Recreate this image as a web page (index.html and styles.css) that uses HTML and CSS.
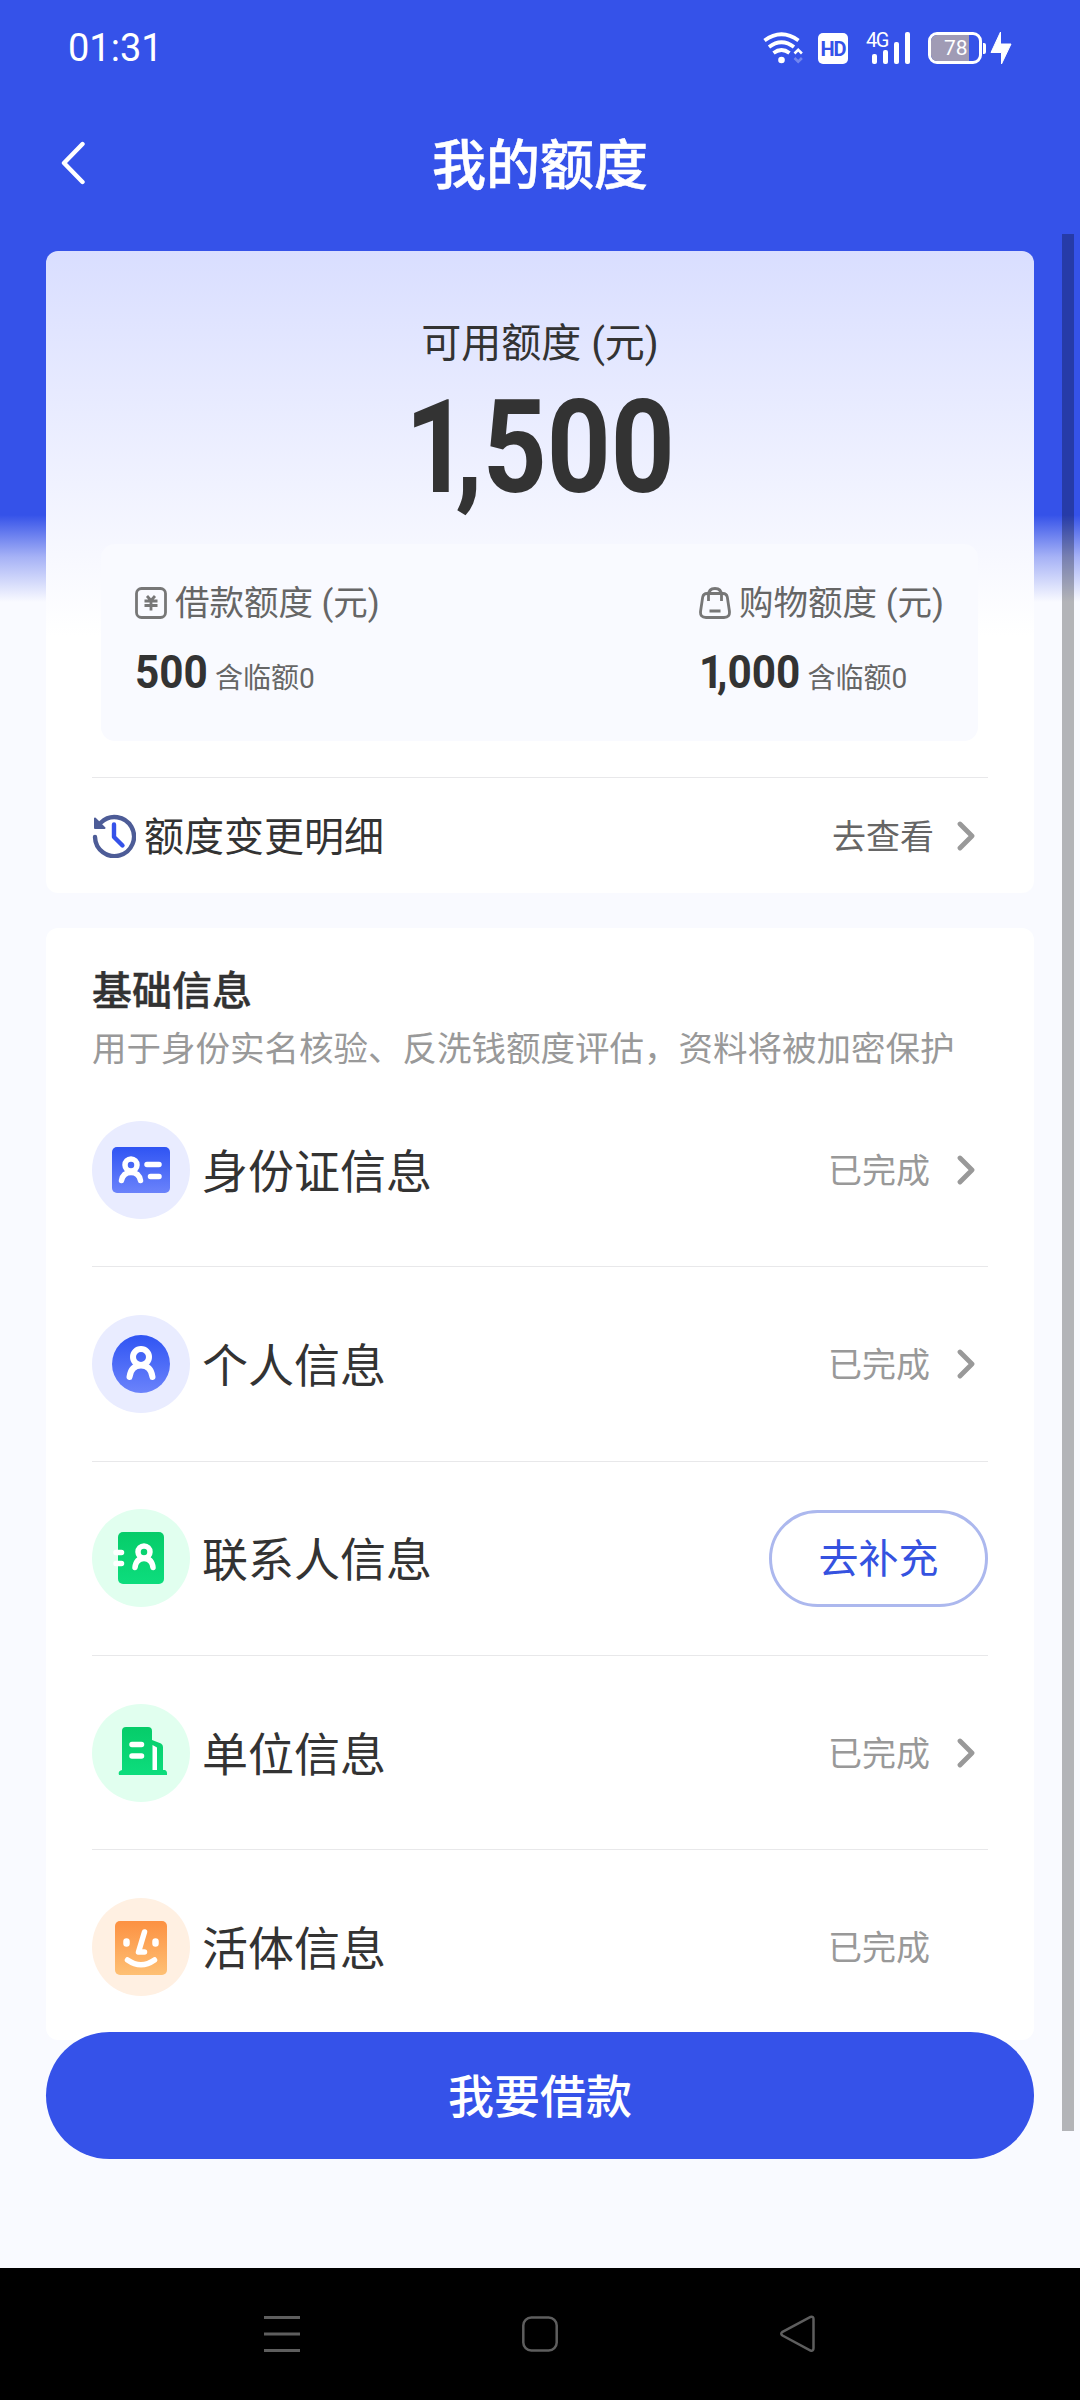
FILE: index.html
```html
<!DOCTYPE html>
<html lang="zh-CN">
<head>
<meta charset="utf-8">
<title>我的额度</title>
<link rel="stylesheet" href="styles.css">
</head>
<body>
<div class="screen">
  <header class="status-bar">
    <span class="clock">01:31</span>
    <div class="status-icons">
      <svg class="ic-wifi" width="40" height="32" viewBox="0 0 40 32" fill="none" stroke="#fff" stroke-width="3.8">
        <path d="M1.500 8.500Q18.500-4 35.500 8.500M6 15Q18.500 5.500 31 15M10.500 21Q18.500 15 26.500 21"/>
        <circle cx="18.500" cy="28" r="3.300" fill="#fff" stroke="none"/>
        <path d="M31.500 21.500l3.700-3.700 3.700 3.700" stroke-width="2.600"/>
        <path d="M31.500 26l3.700 3.700 3.700-3.700" stroke-width="2.600" opacity=".3"/>
      </svg>
      <span class="hd">HD</span>
      <span class="signal">
        <span class="net">4G</span>
        <svg width="44" height="32" viewBox="0 0 44 32" fill="#fff">
          <rect x="6" y="22" width="5" height="10" rx="2"/><rect x="17" y="18" width="5" height="14" rx="2"/><rect x="28" y="10" width="5" height="22" rx="2"/><rect x="39" y="0" width="5" height="32" rx="2"/>
        </svg>
      </span>
      <span class="battery"><span class="level">78</span></span>
      <svg class="ic-bolt" width="22" height="32" viewBox="0 0 22 32" fill="#fff"><path d="M10.500 0V12H21L11.500 32V20.500H1Z" stroke="#fff" stroke-width="1" stroke-linejoin="round"/></svg>
    </div>
  </header>

  <nav class="title-bar">
    <svg class="back" width="24" height="44" viewBox="0 0 24 44" fill="none" stroke="#fff" stroke-width="4.400" stroke-linecap="round" stroke-linejoin="round"><path d="M21.500 3L3 22l18.500 19"/></svg>
    <h1>我的额度</h1>
  </nav>

  <main>
    <section class="card quota">
      <p class="quota-label">可用额度 (元)</p>
      <p class="quota-total"><span><i>1</i><i>,</i>500</span></p>
      <div class="split">
        <div class="part">
          <p class="part-label">
            <svg width="32" height="32" viewBox="0 0 32 32" fill="none" stroke="#777" stroke-width="2.800"><rect x="1.500" y="1.500" width="29" height="29" rx="5"/><path d="M12 9l4 4.500L20 9M9.500 14h13M9.500 18.500h13M16 14v9.500"/></svg>
            <span>借款额度 (元)</span>
          </p>
          <p class="part-value"><b>500</b><small>含临额0</small></p>
        </div>
        <div class="part">
          <p class="part-label">
            <svg width="32" height="32" viewBox="0 0 32 32" fill="none" stroke="#777" stroke-width="2.800"><path d="M8 6.500h16Q27.500 6.500 28.300 10L30.400 24Q31.200 30.500 25 30.500H7Q.8 30.500 1.600 24L3.700 10Q4.500 6.500 8 6.500Z"/><path d="M9.500 14V8.500Q9.500 1.500 16 1.500T22.500 8.500V14M10.500 24h11"/></svg>
            <span>购物额度 (元)</span>
          </p>
          <p class="part-value"><b><i>1</i><i>,</i>000</b><small>含临额0</small></p>
        </div>
      </div>
      <div class="history">
        <svg width="44" height="44" viewBox="0 0 44 44" fill="none" stroke-width="4.400" stroke-linecap="round"><path stroke="#4d5c97" d="M3 23A19.500 19.500 0 1 0 9 8.500"/><path d="M3 4.500V14H12.500Z" fill="#4d5c97" stroke="#4d5c97" stroke-width="2" stroke-linejoin="round"/><path stroke="#3552e9" d="M22 10.500V23L30.500 31.500" stroke-linejoin="round"/></svg>
        <span class="history-name">额度变更明细</span>
        <span class="history-go">去查看</span>
        <svg class="chev" width="18" height="30" viewBox="0 0 18 30"><path d="M3 3l12 12L3 27"/></svg>
      </div>
    </section>

    <section class="card info">
      <h2>基础信息</h2>
      <p class="desc">用于身份实名核验、反洗钱额度评估，资料将被加密保护</p>
      <ul>
        <li>
          <svg class="badge" viewBox="0 0 98 98"><defs><linearGradient id="blue" x2="0" y2="1"><stop stop-color="#2f54f3"/><stop offset="1" stop-color="#6b83fb"/></linearGradient><linearGradient id="green" x2="0" y2="1"><stop stop-color="#06cc69"/><stop offset="1" stop-color="#0ddd7d"/></linearGradient><linearGradient id="orange" x2="0" y2="1"><stop stop-color="#fc9142"/><stop offset="1" stop-color="#fec074"/></linearGradient></defs>
            <circle cx="49" cy="49" r="49" fill="#e9ecff"/><rect x="20" y="26" width="58" height="46" rx="5" fill="url(#blue)"/>
            <g fill="none" stroke="#fff" stroke-width="5.500" stroke-linecap="round"><circle cx="39" cy="44" r="6"/><path d="M29.500 59.500Q31 51.500 39 51.500T48.500 59.500M55 43.500h12M58.500 55.500h8.500"/></g></svg>
          <span class="name">身份证信息</span><span class="state">已完成</span><svg class="chev" width="18" height="30" viewBox="0 0 18 30"><path d="M3 3l12 12L3 27"/></svg>
        </li>
        <li>
          <svg class="badge" viewBox="0 0 98 98"><circle cx="49" cy="49" r="49" fill="#e9ecff"/><circle cx="49" cy="49" r="29" fill="url(#blue)"/>
            <g fill="none" stroke="#fff" stroke-width="6" stroke-linecap="round"><circle cx="49" cy="42" r="8"/><path d="M37.500 62Q39 50.500 49 50.500T60.500 62"/></g></svg>
          <span class="name">个人信息</span><span class="state">已完成</span><svg class="chev" width="18" height="30" viewBox="0 0 18 30"><path d="M3 3l12 12L3 27"/></svg>
        </li>
        <li>
          <svg class="badge" viewBox="0 0 98 98"><circle cx="49" cy="49" r="49" fill="#e1ffef"/><rect x="26" y="23" width="46" height="52" rx="5" fill="url(#green)"/>
            <g fill="none" stroke="#fff" stroke-width="5.500" stroke-linecap="round"><circle cx="52" cy="43" r="6"/><path d="M43 58.500Q44 49.500 52 49.500T61 58.500M24 43.500h5.500M24 54.500h5.500"/></g></svg>
          <span class="name">联系人信息</span><button class="fill-in">去补充</button>
        </li>
        <li>
          <svg class="badge" viewBox="0 0 98 98"><circle cx="49" cy="49" r="49" fill="#e1ffef"/><path fill="url(#green)" d="M34 23H56Q60 23 60 27V36L69 39.500Q71 40.500 71 43V66H73Q75.500 67 75 71H27Q25.500 67 30 66V27Q30 23 34 23Z"/>
            <g fill="none" stroke="#fff" stroke-linecap="round" stroke-width="5.500"><path d="M40 40.500h9.500M40 52h9.500"/></g><path fill="#fff" d="M60.500 41l4.500 2.500V66h-4.500Z"/></svg>
          <span class="name">单位信息</span><span class="state">已完成</span><svg class="chev" width="18" height="30" viewBox="0 0 18 30"><path d="M3 3l12 12L3 27"/></svg>
        </li>
        <li>
          <svg class="badge" viewBox="0 0 98 98"><circle cx="49" cy="49" r="49" fill="#fff0e2"/><rect x="23" y="23" width="52" height="54" rx="5" fill="url(#orange)"/>
            <g fill="none" stroke="#fff" stroke-width="5.500" stroke-linecap="round" stroke-linejoin="round"><path d="M34.500 43.500v2M63.500 43.500v2" stroke-width="6.500"/><path d="M52.500 34L46.500 54h6M35.500 62Q49 71.500 62.500 62"/></g></svg>
          <span class="name">活体信息</span><span class="state">已完成</span><span class="chev-space"></span>
        </li>
      </ul>
    </section>
    <button class="borrow">我要借款</button>
  </main>
  <div class="scrollbar"></div>

  <footer class="sys-nav">
    <svg width="38" height="38" viewBox="0 0 38 38" fill="none" stroke="#5e5e5e" stroke-width="3"><path d="M1 2.500h36M1 19h36M1 35.500h36"/></svg>
    <svg width="38" height="38" viewBox="0 0 38 38" fill="none" stroke="#5e5e5e" stroke-width="2.500"><rect x="2.300" y="2.500" width="33.400" height="33" rx="8"/></svg>
    <svg width="38" height="38" viewBox="0 0 38 38" fill="none" stroke="#5e5e5e" stroke-width="2.500"><path d="M3.500 16.800L31.500 2Q34.500 1 34.500 4V33Q34.500 36.500 31.500 35.500L3.500 20.500Q1 18.700 3.500 16.800Z"/></svg>
  </footer>
</div>
</body>
</html>
```
FILE: styles.css
```css
* { box-sizing: border-box; margin: 0; padding: 0; }
body {
  width: 1080px;
  font-family: Roboto, "Noto Sans CJK SC", sans-serif;
  color: #333;
}
.screen {
  position: relative;
  display: flex;
  flex-direction: column;
  height: 2400px;
  overflow: hidden;
  background: linear-gradient(#3552e9 515px, #a6b2f6 557px, #f9faff 602px);
}
i { font-style: normal; }
svg { flex: none; display: block; }

.status-bar {
  height: 96px;
  padding: 0 68px 0 68px;
  display: flex;
  align-items: center;
  justify-content: space-between;
  color: #fff;
}
.clock { font-size: 38px; }
.status-icons { display: flex; align-items: center; }
.hd {
  width: 30px;
  height: 31px;
  margin-left: 15px;
  border-radius: 5px;
  background: #fff;
  color: #3552e9;
  font: 700 20px/32px Roboto, sans-serif;
  letter-spacing: -1px;
  text-align: center;
}
.signal { position: relative; margin-left: 18px; }
.net {
  position: absolute;
  left: 0;
  top: -1px;
  font-size: 20px;
  line-height: 18px;
  letter-spacing: -1.5px;
}
.battery {
  position: relative;
  width: 54px;
  height: 32px;
  margin-left: 18px;
  border: 3px solid #fff;
  border-radius: 9px;
}
.battery::after {
  content: "";
  position: absolute;
  right: -7px;
  top: 8px;
  width: 3px;
  height: 11px;
  border-radius: 0 2px 2px 0;
  background: #fff;
}
.level {
  display: block;
  width: 38px;
  height: 26px;
  padding-left: 13px;
  border-radius: 6px 0 0 6px;
  background: #a09bb5;
  font-size: 21px;
  line-height: 27px;
}
.ic-bolt { margin-left: 8px; }

.title-bar {
  position: relative;
  height: 155px;
  display: flex;
  align-items: flex-start;
  padding: 45px 61px 0;
}
.title-bar h1 {
  position: absolute;
  inset: 31px 0 auto;
  font-size: 54px;
  line-height: 80px;
  font-weight: 500;
  -webkit-text-stroke: .5px #fff;
  color: #fff;
  text-align: center;
}

main { padding: 0 46px; }
.card { border-radius: 12px; background: #fff; }
.quota {
  height: 642px;
  padding: 63px 46px 0;
  background: linear-gradient(#d9deff, #fff 385px);
}
.quota-label { font-size: 40px; line-height: 60px; text-align: center; }
.quota-total {
  height: 170px;
  font-weight: 700;
  font-size: 129px;
  line-height: 148px;
  text-align: center;
}
.quota-total span { display: inline-block; transform: scaleX(.865); }
.quota-total i:first-child { letter-spacing: -16px; }
.split {
  height: 197px;
  margin: 0 10px 0 9px;
  padding: 32px 34px 0;
  display: flex;
  justify-content: space-between;
  border-radius: 14px;
  background: #f9faff;
}
.part-label {
  display: flex;
  align-items: center;
  gap: 8px;
  font-size: 34.500px;
  line-height: 54px;
  color: #666;
}
.part-value { display: flex; align-items: baseline; gap: 7px; margin-top: 14px; line-height: 56px; }
.part-value b {
  font-size: 47px;
  transform: scaleX(.9);
  transform-origin: left;
  margin-right: -8px;
}
.part-value b i:first-child { letter-spacing: -7px; }
.part-value b:has(i) { margin-right: -11px; }
.part-value small { font-size: 28px; color: #666; }
.history {
  margin-top: 36px;
  height: 116px;
  border-top: 1px solid #e8e8ea;
  display: flex;
  align-items: center;
}
.history-name { margin-left: 8px; padding-bottom: 3px; font-size: 40px; }
.history-go { margin-left: auto; padding-bottom: 2px; font-size: 34px; color: #666; }
.chev { margin: 0 13px 0 23px; fill: none; stroke: #999; stroke-width: 4.800; stroke-linecap: round; stroke-linejoin: round; }
.chev-space { width: 54px; }

.info { height: 1112px; margin-top: 35px; padding: 35px 46px 0; }
.info h2 { font-size: 40px; line-height: 58px; font-weight: 500; -webkit-text-stroke: .4px #333; }
.desc { font-size: 34.500px; line-height: 56px; color: #999; white-space: nowrap; }
.info ul { list-style: none; margin-top: -4px; }
.info li {
  height: 194.300px;
  display: flex;
  align-items: center;
  border-bottom: 1px solid #e8e8ea;
}
.info li:last-child { border-bottom-color: transparent; }
.badge { width: 98px; height: 98px; }
.name { margin-left: 12px; padding-bottom: 4px; font-size: 46px; }
.state { margin: 0 4px 0 auto; padding-bottom: 3px; font-size: 34px; color: #999; }
.fill-in {
  margin-left: auto;
  width: 219px;
  height: 97px;
  padding-top: 3px;
  border: 3px solid #acb8ee;
  border-radius: 49px;
  background: #fff;
  font: 400 40px/1 Roboto, "Noto Sans CJK SC", sans-serif;
  color: #3552e0;
}
.borrow {
  position: relative;
  display: block;
  width: 988px;
  height: 127px;
  margin-top: -8px;
  padding-top: 2px;
  border: 0;
  border-radius: 64px;
  background: #3552e9;
  color: #fff;
  font: 500 46px/1 Roboto, "Noto Sans CJK SC", sans-serif;
}
.scrollbar {
  position: absolute;
  left: 1062px;
  top: 234px;
  width: 12px;
  height: 1897px;
  background: rgba(0, 0, 0, .28);
}
.sys-nav {
  height: 132px;
  margin-top: auto;
  padding: 0 263px;
  display: flex;
  align-items: center;
  justify-content: space-between;
  background: #000;
}
```
